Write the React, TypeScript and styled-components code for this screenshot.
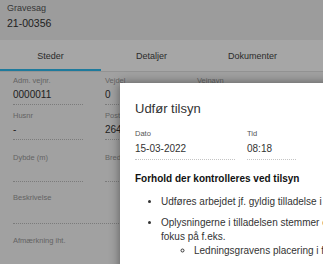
import * as React from 'react';
import styled, { createGlobalStyle } from 'styled-components';

const GlobalStyle = createGlobalStyle`
  html, body {
    margin: 0;
    padding: 0;
    width: 323px;
    height: 264px;
    overflow: hidden;
    font-family: 'Liberation Sans', Arial, sans-serif;
  }
`;

const Page = styled.div`
  position: relative;
  width: 323px;
  height: 264px;
  overflow: hidden;
  background: #f7f7f7;
`;

const Header = styled.header`
  height: 40px;
  box-sizing: border-box;
  padding: 3px 7px 0;
  background: #f0f0f0;
`;

const CaseLabel = styled.div`
  font-size: 9px;
  line-height: 11px;
  color: #555;
`;

const CaseNumber = styled.div`
  margin-top: 2px;
  font-size: 10.5px;
  line-height: 14px;
  color: #333;
`;

const TabBar = styled.nav`
  display: flex;
  height: 31px;
  background: #fff;
  border-bottom: 1px solid #e2e2e2;
`;

const Tab = styled.div<{ $active?: boolean }>`
  width: 101px;
  display: flex;
  align-items: center;
  justify-content: center;
  box-sizing: border-box;
  padding-top: 2px;
  font-size: 9px;
  color: #444;
  border-bottom: 2px solid ${({ $active }) => ($active ? '#2ebcf0' : 'transparent')};
`;

const Content = styled.section`
  padding: 4px 13px 0;
`;

const Row = styled.div<{ $space: number }>`
  display: grid;
  grid-template-columns: repeat(3, 70px);
  column-gap: 22px;
  margin-top: ${({ $space }) => $space}px;
`;

const Field = styled.div<{ $wide?: boolean }>`
  grid-column: ${({ $wide }) => ($wide ? '1 / -1' : 'auto')};
  padding-bottom: 2px;
  border-bottom: 1px dotted #bdbdbd;
`;

const Label = styled.div`
  font-size: 7.5px;
  line-height: 10px;
  color: #9a9a9a;
  white-space: nowrap;
`;

const Value = styled.div<{ $tall?: boolean }>`
  margin-top: 2px;
  min-height: ${({ $tall }) => ($tall ? 16 : 14)}px;
  font-size: 10px;
  line-height: 14px;
  color: #333;
`;

const Dim = styled.div`
  position: absolute;
  inset: 0;
  background: rgba(0, 0, 0, 0.35);
`;

const Dialog = styled.div`
  position: absolute;
  left: 120px;
  top: 83px;
  width: 420px;
  height: 260px;
  box-sizing: border-box;
  padding: 18px 15px;
  background: #fff;
  box-shadow: 0 0 10px rgba(0, 0, 0, 0.45);
  color: #333;
`;

const DialogTitle = styled.h2`
  margin: 0;
  font-size: 13px;
  line-height: 16px;
  font-weight: normal;
  color: #333;
`;

const DateRow = styled.div`
  display: flex;
  gap: 12px;
  margin-top: 12px;
`;

const DateField = styled.div<{ $width: number }>`
  width: ${({ $width }) => $width}px;
  padding-bottom: 3px;
  border-bottom: 1px dotted #c4c4c4;
`;

const DateLabel = styled.div`
  font-size: 7.5px;
  line-height: 10px;
  color: #555;
`;

const DateValue = styled.div`
  margin-top: 3px;
  font-size: 10px;
  line-height: 14px;
  color: #333;
`;

const SectionTitle = styled.h3`
  margin: 12px 0 0;
  font-size: 10px;
  line-height: 14px;
  font-weight: bold;
  color: #111;
`;

const CheckList = styled.ul`
  margin: 9px 0 0;
  padding-left: 26px;
  font-size: 10px;
  line-height: 14px;
  color: #333;

  li + li {
    margin-top: 7px;
  }
`;

const SubList = styled.ul`
  margin: 0;
  padding-left: 33px;
  list-style-type: circle;
`;

const fields = [
  [
    { label: 'Adm. vejnr.', value: '0000011' },
    { label: 'Vejdel', value: '0' },
    { label: 'Vejnavn', value: '' },
  ],
  [
    { label: 'Husnr', value: '-' },
    { label: 'Postnr', value: '2640' },
    { label: 'By', value: '' },
  ],
  [
    { label: 'Dybde (m)', value: '' },
    { label: 'Bredde (m)', value: '' },
    { label: 'Længde (m)', value: '' },
  ],
];

const spacing = [0, 6, 13];

export default function App() {
  return (
    <Page>
      <GlobalStyle />
      <Header>
        <CaseLabel>Gravesag</CaseLabel>
        <CaseNumber>21-00356</CaseNumber>
      </Header>
      <TabBar>
        <Tab $active>Steder</Tab>
        <Tab>Detaljer</Tab>
        <Tab>Dokumenter</Tab>
      </TabBar>
      <Content>
        {fields.map((row, i) => (
          <Row key={i} $space={spacing[i]}>
            {row.map((f) => (
              <Field key={f.label}>
                <Label>{f.label}</Label>
                <Value>{f.value}</Value>
              </Field>
            ))}
          </Row>
        ))}
        <Row $space={11}>
          <Field $wide>
            <Label>Beskrivelse</Label>
            <Value $tall />
          </Field>
        </Row>
        <Row $space={12}>
          <Field $wide>
            <Label>Afmærkning iht.</Label>
            <Value $tall />
          </Field>
        </Row>
      </Content>
      <Dim />
      <Dialog>
        <DialogTitle>Udfør tilsyn</DialogTitle>
        <DateRow>
          <DateField $width={100}>
            <DateLabel>Dato</DateLabel>
            <DateValue>15-03-2022</DateValue>
          </DateField>
          <DateField $width={49}>
            <DateLabel>Tid</DateLabel>
            <DateValue>08:18</DateValue>
          </DateField>
        </DateRow>
        <SectionTitle>Forhold der kontrolleres ved tilsyn</SectionTitle>
        <CheckList>
          <li>Udføres arbejdet jf. gyldig tilladelse i henhold til vejloven</li>
          <li>
            Oplysningerne i tilladelsen stemmer overens med forholdene, med
            <br />
            fokus på f.eks.
            <SubList>
              <li>Ledningsgravens placering i forhold til vejen</li>
            </SubList>
          </li>
        </CheckList>
      </Dialog>
    </Page>
  );
}
